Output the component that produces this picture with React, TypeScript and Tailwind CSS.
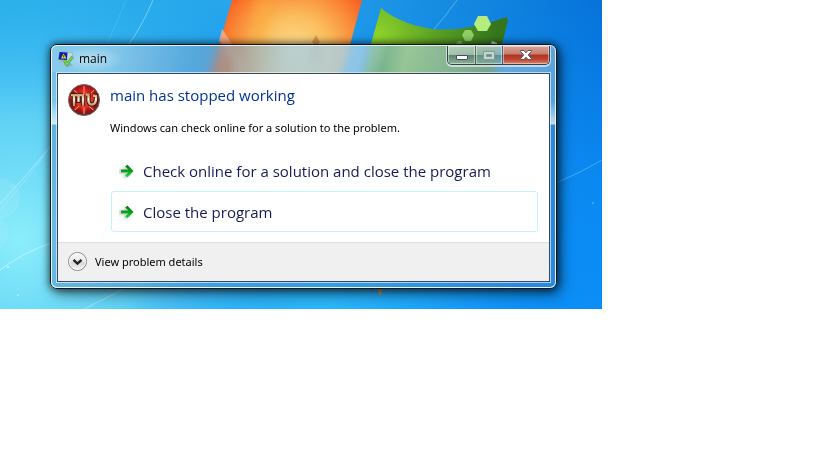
import type { ReactNode } from 'react';

const actions = [
  { label: 'Check online for a solution and close the program', focused: false },
  { label: 'Close the program', focused: true },
];

function Wallpaper() {
  return (
    <svg
      aria-hidden="true"
      className="absolute inset-0 h-full w-full"
      viewBox="0 0 602 309"
      preserveAspectRatio="xMidYMid slice"
    >
      <defs>
        <linearGradient id="sky" x1="0" y1="0" x2="1" y2="0">
          <stop offset="0" stopColor="#1fa9e6" />
          <stop offset="0.45" stopColor="#2aa6ec" />
          <stop offset="0.75" stopColor="#158ae0" />
          <stop offset="1" stopColor="#0672da" />
        </linearGradient>
        <linearGradient id="lift" x1="0" y1="0" x2="0" y2="1">
          <stop offset="0" stopColor="#0b8cf4" stopOpacity="0" />
          <stop offset="0.6" stopColor="#0b8cf4" stopOpacity="0.9" />
          <stop offset="1" stopColor="#0b8ef6" />
        </linearGradient>
        <radialGradient id="glow" gradientUnits="userSpaceOnUse" cx="20" cy="240" r="300">
          <stop offset="0" stopColor="#8ceefb" />
          <stop offset="0.4" stopColor="#6edcf6" stopOpacity="0.85" />
          <stop offset="1" stopColor="#35b8f5" stopOpacity="0" />
        </radialGradient>
        <radialGradient id="low" gradientUnits="userSpaceOnUse" cx="320" cy="330" r="260">
          <stop offset="0" stopColor="#2fbcfb" />
          <stop offset="0.5" stopColor="#1aa2f8" stopOpacity="0.85" />
          <stop offset="1" stopColor="#0a8cf4" stopOpacity="0" />
        </radialGradient>
        <radialGradient id="red" gradientUnits="userSpaceOnUse" cx="295" cy="52" r="90">
          <stop offset="0" stopColor="#fbe196" />
          <stop offset="0.4" stopColor="#fbbd5c" />
          <stop offset="0.72" stopColor="#fa8634" />
          <stop offset="1" stopColor="#f64f1c" />
        </radialGradient>
        <radialGradient id="green" gradientUnits="userSpaceOnUse" cx="378" cy="36" r="120">
          <stop offset="0" stopColor="#8fd42c" />
          <stop offset="0.45" stopColor="#5da524" />
          <stop offset="1" stopColor="#35751c" />
        </radialGradient>
        <filter id="soft">
          <feGaussianBlur stdDeviation="4" />
        </filter>
      </defs>
      <rect width="602" height="309" fill="url(#sky)" />
      <rect width="602" height="309" fill="url(#lift)" />
      <rect width="602" height="309" fill="url(#low)" />
      <rect width="602" height="309" fill="url(#glow)" />
      <path d="M232 0H362L338 90H206Z" fill="url(#red)" />
      <path d="M256 0L275 0L262 44L250 44Z" fill="#fbb03f" opacity="0.5" filter="url(#soft)" />
      <path d="M222 29Q236 48 246 74L240 78Q232 52 219 41Z" fill="#fbc3a5" opacity="0.65" />
      <path d="M316 35L320 42L318 44L321 62H312L314 44L312 42Z" fill="#d08a3c" opacity="0.75" />
      <path d="M381 8Q400 24 432 29Q468 32 506 17L508 20L491 90H358Z" fill="url(#green)" />
      <path d="M474 24L478 16H487L491 24L487 31H478Z" fill="#b4ec7e" />
      <path d="M462 35L465 30H471L474 35L471 41H465Z" fill="#8fce62" />
      <path d="M456 44L458 41H461L463 44Z" fill="#86b95a" />
      <path d="M491 44L492 41L497 43V44Z" fill="#c9d6c4" />
      <path d="M377 287H383L381 295H379Z" fill="#bf9a62" />
      <g fill="none" stroke="#d3f6ff">
        <path d="M153 0Q142 26 129 44" opacity="0.45" />
        <path d="M126 0Q118 20 107 44" opacity="0.15" />
        <path d="M457 0Q446 16 434 29" opacity="0.35" />
        <path d="M0 204Q24 178 51 146" opacity="0.55" />
        <path d="M0 210Q24 183 44 156" opacity="0.3" />
        <path d="M0 270Q24 252 51 243" opacity="0.7" />
        <path d="M84 309Q110 296 124 289" opacity="0.5" />
        <path d="M556 183Q580 173 602 160" opacity="0.3" />
      </g>
      <g fill="#d9f9ff">
        <circle cx="0" cy="198" r="20" opacity="0.12" />
        <circle cx="-12" cy="232" r="20" opacity="0.12" />
        <circle cx="8" cy="267" r="1" />
        <circle cx="18" cy="295" r="1" opacity="0.6" />
        <circle cx="593" cy="203" r="1" opacity="0.3" />
      </g>
    </svg>
  );
}

function ReportIcon() {
  return (
    <svg aria-hidden="true" className="size-4 shrink-0" viewBox="0 0 16 16">
      <path d="M5 13L11 16L15 14L11 11Z" fill="#8f9aa4" opacity="0.6" />
      <path d="M3 1L14 1.5L15 8L11 10L4 9.5Z" fill="#c9d6ee" stroke="#8fa0bd" strokeWidth="0.6" />
      <path d="M0.5 9L9 10L8 11.5L1.5 10.8Z" fill="#a9b3bd" />
      <path d="M1.5 1L9.5 1.5L9 9L0.5 8.5Z" fill="#0a1fae" />
      <path d="M5.5 2.5L8.5 7.5H3Z" fill="#f7d81c" />
      <path d="M5.7 4.2V6M5.7 6.5V7" stroke="#222" strokeWidth="0.8" />
      <path d="M6.5 9.5L9 13.5L14.5 5.5" fill="none" stroke="#3a9e30" strokeWidth="2.8" />
      <path d="M6.5 9.5L9 13.5L14.5 5.5" fill="none" stroke="#72d94c" strokeWidth="1.6" />
    </svg>
  );
}

function GameIcon() {
  return (
    <svg aria-hidden="true" className="size-8 shrink-0" viewBox="0 0 32 32">
      <defs>
        <radialGradient id="orb" cx="0.5" cy="0.45" r="0.52">
          <stop offset="0" stopColor="#ff7042" />
          <stop offset="0.5" stopColor="#d8201e" />
          <stop offset="0.82" stopColor="#9a1215" />
          <stop offset="1" stopColor="#5b2423" />
        </radialGradient>
        <linearGradient id="gold" gradientUnits="userSpaceOnUse" x1="0" y1="9" x2="0" y2="23">
          <stop offset="0" stopColor="#b98455" />
          <stop offset="0.45" stopColor="#fff2d2" />
          <stop offset="1" stopColor="#a87b50" />
        </linearGradient>
      </defs>
      <circle cx="16" cy="16" r="15.5" fill="url(#orb)" stroke="#7d6361" />
      <path d="M16 1L19 10L27 5L23 13H31L23 19L27 27L19 23L16 31L13 23L5 27L9 19L1 13H9L5 5L13 10Z" fill="#ee3829" opacity="0.7" />
      <path d="M16 2V10M6 6L11 11M26 6L21 11M16 23V30M7 26L11 22M25 26L21 22" stroke="#f79068" />
      <g fill="none" stroke="#2f1210" strokeWidth="4.4" opacity="0.85">
        <path d="M3 11H15M6 11V22M10.5 11V19M15 11V22" />
        <path d="M19 11H20.5V17Q21 21 24.5 20.5Q28.5 20 28 12L25 11" />
      </g>
      <g fill="none" stroke="url(#gold)" strokeWidth="2.3">
        <path d="M3 11.2L16 11M6 11V22M10.5 11V18M15 11V22" />
        <path d="M18 10.5H20.5V17Q21 21 24.5 20.5Q28.5 20 28 12L25 11.5" />
      </g>
    </svg>
  );
}

function ArrowIcon() {
  return (
    <svg aria-hidden="true" className="size-4 shrink-0" viewBox="0 0 16 16">
      <defs>
        <linearGradient id="arrow" gradientUnits="userSpaceOnUse" x1="0" y1="2" x2="0" y2="14">
          <stop offset="0" stopColor="#067d12" />
          <stop offset="0.5" stopColor="#0b9d1d" />
          <stop offset="1" stopColor="#08e53c" />
        </linearGradient>
        <filter id="haze" x="-0.3" y="-0.3" width="1.6" height="1.6">
          <feGaussianBlur stdDeviation="1" />
        </filter>
      </defs>
      <path d="M0 6H6L4 3H8L13 9L8 15H4L6 11H0Z" fill="#b9bfbb" opacity="0.7" filter="url(#haze)" />
      <path d="M2 6.6H9.3L6.2 3.4L8.4 1.8L14.6 8L8.4 14.2L6.2 12.6L9.3 9.4H2Z" fill="url(#arrow)" />
    </svg>
  );
}

function ChevronIcon() {
  return (
    <svg aria-hidden="true" className="size-5 shrink-0" viewBox="0 0 20 20">
      <defs>
        <linearGradient id="knob" x1="0" y1="0" x2="0" y2="1">
          <stop offset="0" stopColor="#fbfbfb" />
          <stop offset="0.5" stopColor="#e7e7e7" />
          <stop offset="0.55" stopColor="#d6d6d6" />
          <stop offset="1" stopColor="#f4f4f4" />
        </linearGradient>
      </defs>
      <circle cx="9.5" cy="9.5" r="9" fill="url(#knob)" stroke="#858585" />
      <circle cx="9.5" cy="9.5" r="8" fill="none" stroke="#fff" opacity="0.8" />
      <path d="M5.5 7.8L9.5 11.6L13.5 7.8" fill="none" stroke="#222" strokeWidth="2.4" />
    </svg>
  );
}

function CaptionButton({ label, className, children }: { label: string; className: string; children: ReactNode }) {
  return (
    <button
      type="button"
      aria-label={label}
      className={`flex h-[18px] items-center justify-center shadow-[inset_0_0_0_1px_rgba(255,255,255,0.45)] ${className}`}
    >
      {children}
    </button>
  );
}

function TitleBar() {
  return (
    <header className="flex h-[26px] items-start justify-between bg-[linear-gradient(105deg,rgba(255,255,255,0.15)_60px,rgba(50,140,205,0.35)_140px,rgba(90,110,130,0.3)_175px,rgba(170,205,220,0.6)_230px,rgba(170,212,235,0.6)_300px,rgba(50,130,200,0.2)_325px,rgba(190,220,225,0.25)_345px,rgba(110,160,200,0.2)_100%)] pr-[5px] pl-1.5">
      <div className="flex h-[26px] items-center gap-1 bg-[radial-gradient(closest-side,rgba(255,255,255,0.4),transparent)] pr-4">
        <ReportIcon />
        <h1 className="pl-px text-xs leading-4 text-black">main</h1>
      </div>
      <div className="flex overflow-hidden rounded-b-[5px] border border-t-0 border-[#37434b] shadow-[0_1px_0_1px_rgba(255,255,255,0.6)]">
        <CaptionButton
          label="Minimize"
          className="w-7 border-r border-[#37434b]/70 bg-[linear-gradient(rgba(255,255,255,0.35)_0%,rgba(255,255,255,0.2)_48%,rgba(50,80,70,0.5)_50%,rgba(150,180,160,0.4)_100%)]"
        >
          <svg aria-hidden="true" className="mt-1 h-[5px] w-3" viewBox="0 0 12 5">
            <rect x="0.5" y="0.5" width="11" height="4" rx="0.5" fill="#fff" stroke="#484d62" />
          </svg>
        </CaptionButton>
        <CaptionButton
          label="Maximize"
          className="w-[27px] border-r border-[#37434b]/70 bg-[linear-gradient(rgba(255,255,255,0.3)_0%,rgba(255,255,255,0.15)_48%,rgba(50,80,90,0.3)_50%,rgba(150,180,180,0.3)_100%)]"
        >
          <svg aria-hidden="true" className="h-[9px] w-3" viewBox="0 0 12 9">
            <path d="M0.5 0.5H11.5V8.5H0.5ZM3.5 3.5V5.5H8.5V3.5Z" fill="#c5d5ce" fillRule="evenodd" stroke="#7f9a98" />
          </svg>
        </CaptionButton>
        <CaptionButton
          label="Close"
          className="w-[46px] bg-[linear-gradient(#d8a49a_0%,#c77b6d_45%,#a93420_50%,#c24530_75%,#d5856e_100%)]"
        >
          <svg aria-hidden="true" className="h-[10px] w-3" viewBox="0 0 12 10">
            <path
              d="M0.5 0.5H4L6 2.8L8 0.5H11.5V1.3L8.3 5L11.5 8.7V9.5H8L6 7.2L4 9.5H0.5V8.7L3.7 5L0.5 1.3Z"
              fill="#fff"
              stroke="#535666"
            />
          </svg>
        </CaptionButton>
      </div>
    </header>
  );
}

function ErrorDialog() {
  return (
    <section
      aria-label="main"
      className="relative mt-11 mr-[45px] mb-5 ml-[50px] rounded-[7px] border border-[#10161b] shadow-[0_0_7px_1px_rgba(0,0,0,0.5),3px_4px_14px_rgba(0,0,0,0.6)] backdrop-blur-xs"
    >
      <div className="rounded-md border border-white/85 bg-[linear-gradient(to_bottom,rgba(170,200,220,0.5)_0,rgba(170,200,220,0.45)_55px,rgba(235,245,250,0.8)_78px,rgba(90,140,190,0.45)_79px,rgba(80,130,195,0.45)_100%)]">
        <TitleBar />
        <div className="mx-1 mb-1 border border-white/60">
          <div className="border border-[#2f4a60] bg-white">
            <div className="flex gap-2.5 pt-2.5 pr-[11px] pb-2.5 pl-2.5">
              <GameIcon />
              <div className="min-w-0 flex-1">
                <h2 className="text-[15px] leading-[22px] text-[#003399]">main has stopped working</h2>
                <p className="mt-3.5 font-['Noto_Sans',sans-serif] text-[11px] leading-4 text-black">
                  Windows can check online for a solution to the problem.
                </p>
                <div className="mt-3.5 ml-px flex flex-col">
                  {actions.map((a) => (
                    <button
                      key={a.label}
                      type="button"
                      className={`flex h-[41px] w-full items-center gap-2 rounded-[3px] border pl-[7px] text-left text-[15px] leading-6 text-[#151c55] ${
                        a.focused ? 'border-[#c6f3fb]' : 'border-transparent'
                      }`}
                    >
                      <ArrowIcon />
                      {a.label}
                    </button>
                  ))}
                </div>
              </div>
            </div>
            <footer className="border-t border-[#dfdfdf] bg-[#f0f0f0] px-2.5 py-[9px]">
              <button
                type="button"
                className="flex items-center gap-[7px] font-['Noto_Sans',sans-serif] text-[11px] leading-4 text-black"
              >
                <ChevronIcon />
                View problem details
              </button>
            </footer>
          </div>
        </div>
      </div>
    </section>
  );
}

export default function App() {
  return (
    <main className="min-h-screen bg-white font-['Segoe_UI','Open_Sans','Noto_Sans',sans-serif]">
      <div className="relative flow-root w-full max-w-[602px] overflow-hidden">
        <Wallpaper />
        <ErrorDialog />
      </div>
    </main>
  );
}
